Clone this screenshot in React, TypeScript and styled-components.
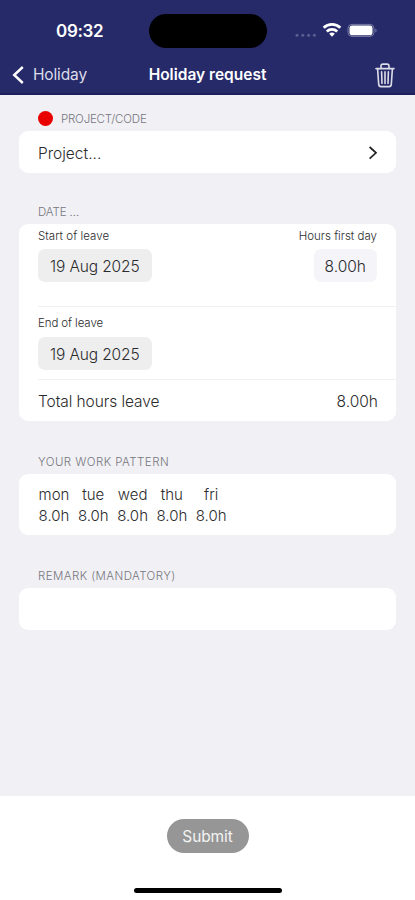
import React from "react";
import styled, { createGlobalStyle } from "styled-components";

const days = [
  { name: "mon", hours: "8.0h" },
  { name: "tue", hours: "8.0h" },
  { name: "wed", hours: "8.0h" },
  { name: "thu", hours: "8.0h" },
  { name: "fri", hours: "8.0h" },
];

const App = () => {
  return (
    <>
      <GlobalStyle />
      <Screen>
        {/* HEADER */}
        <Header>
          <StatusBar>
            <Clock>09:32</Clock>
            <Island />
            <StatusIcons>
              <svg width="84" height="20" viewBox="0 0 84 20">
                <g fill="#5a5e91">
                  <circle cx="3" cy="14.2" r="1.5" />
                  <circle cx="8.8" cy="14.2" r="1.5" />
                  <circle cx="14.6" cy="14.2" r="1.5" />
                  <circle cx="20.4" cy="14.2" r="1.5" />
                </g>
                <g fill="none" stroke="#fff" strokeWidth="2.8">
                  <path d="M29.7 6.7a12.2 12.2 0 0 1 16.6 0" />
                  <path d="M32.8 10.4a7.6 7.6 0 0 1 10.4 0" />
                </g>
                <path d="M38 15.8l-2.8-3a4.2 4.2 0 0 1 5.6 0z" fill="#fff" />
                <rect
                  x="54"
                  y="3.4"
                  width="26"
                  height="12"
                  rx="4"
                  fill="none"
                  stroke="#777aa5"
                />
                <rect x="55.5" y="4.6" width="23" height="9.6" rx="2.8" fill="#fff" />
                <path d="M81.4 7.4c1.6.5 1.6 3.5 0 4z" fill="#777aa5" />
              </svg>
            </StatusIcons>
          </StatusBar>
          <NavBar>
            <Back>
              <svg width="12" height="20" viewBox="0 0 12 20">
                <path
                  d="M10.8 2L2.2 10l8.6 8"
                  fill="none"
                  stroke="#fff"
                  strokeWidth="2.4"
                />
              </svg>
              <span>Holiday</span>
            </Back>
            <Title>Holiday request</Title>
            <Trash>
              <svg width="20" height="26" viewBox="0 0 20 26">
                <g
                  fill="none"
                  stroke="#dcdce9"
                  strokeWidth="1.6"
                  strokeLinecap="round"
                  strokeLinejoin="round"
                >
                  <path d="M1 6.6h18" />
                  <path d="M6 6.4V4.1Q6 2.1 8 2.1h4q2 0 2 2V6.4" />
                  <path d="M2.6 6.9l1.1 15.5q.2 2.2 2.2 2.2h8.2q2 0 2.2-2.2L17.4 6.9" />
                  <path d="M6.6 9.9l.4 11.5M10 9.9v11.5M13.4 9.9L13 21.4" />
                </g>
              </svg>
            </Trash>
          </NavBar>
        </Header>

        {/* FORM */}
        <Form>
          <Caption $height={36} $spacing={-0.2}>
            <Dot />
            PROJECT/CODE
          </Caption>
          <Card>
            <Row $height={42}>
              <Text>Project...</Text>
              <svg width="9" height="16" viewBox="0 0 9 16">
                <path
                  d="M.6 2L7 7.8.6 13.6"
                  fill="none"
                  stroke="#222"
                  strokeWidth="1.7"
                />
              </svg>
            </Row>
          </Card>

          <Caption $height={51} $spacing={-0.1}>
            DATE ...
          </Caption>
          <Card>
            <Field $height={82}>
              <FieldLine>
                <Label $spacing={0.05}>Start of leave</Label>
                <Label>Hours first day</Label>
              </FieldLine>
              <FieldLine>
                <Chip>19 Aug 2025</Chip>
                <Chip $pale>8.00h</Chip>
              </FieldLine>
            </Field>
            <Field $height={73} $divided>
              <Label $offset={5} $spacing={-0.1}>
                End of leave
              </Label>
              <Chip>19 Aug 2025</Chip>
            </Field>
            <Row $height={42} $divided>
              <Text $spacing={-0.08}>Total hours leave</Text>
              <Text>8.00h</Text>
            </Row>
          </Card>

          <Caption $height={53} $spacing={0.45}>
            YOUR WORK PATTERN
          </Caption>
          <Card>
            <Pattern>
              {days.map((day) => (
                <Day key={day.name}>
                  <span>{day.name}</span>
                  <span>{day.hours}</span>
                </Day>
              ))}
            </Pattern>
          </Card>

          <Caption $height={53} $spacing={0.42}>
            REMARK (MANDATORY)
          </Caption>
          <Card>
            <Remark aria-label="Remark" />
          </Card>
        </Form>

        {/* FOOTER */}
        <Footer>
          <Submit>Submit</Submit>
          <HomeBar />
        </Footer>
      </Screen>
    </>
  );
};

const GlobalStyle = createGlobalStyle`
  * {
    box-sizing: border-box;
  }

  body {
    margin: 0;
    font-family: Inter, "Liberation Sans", sans-serif;
    color: #2b2b2d;
  }

  svg {
    display: block;
  }
`;

const Screen = styled.main`
  width: 415px;
  height: 900px;
  display: flex;
  flex-direction: column;
  overflow: hidden;
  background: #f0f0f5;
`;

const Header = styled.header`
  height: 95px;
  flex: none;
  color: #fff;
  background: #262a68;
  border-bottom: 2px solid #1e205e;
`;

const StatusBar = styled.div`
  height: 62px;
  display: grid;
  grid-template-columns: 149px 118px 1fr;
  align-items: center;
`;

const Clock = styled.span`
  padding-left: 56px;
  font-size: 17px;
  font-weight: 600;
  letter-spacing: -0.3px;
`;

const Island = styled.div`
  height: 34px;
  border-radius: 17px;
  background: #000;
`;

const StatusIcons = styled.div`
  padding-left: 27px;
`;

const NavBar = styled.nav`
  height: 23px;
  display: grid;
  grid-template-columns: 1fr auto 1fr;
  align-items: center;
  padding: 0 20px 0 12px;
`;

const Back = styled.div`
  display: flex;
  align-items: center;
  gap: 9px;
  font-size: 15.5px;
  line-height: 20px;
  letter-spacing: -0.15px;
  color: #dcdce9;
`;

const Title = styled.h1`
  margin: 0 0 0 8px;
  font-size: 15.5px;
  line-height: 20px;
  font-weight: 600;
`;

const Trash = styled.div`
  justify-self: end;
`;

const Form = styled.section`
  flex: 1;
  padding: 0 19px;
`;

const Caption = styled.h2<{ $height: number; $spacing: number }>`
  height: ${({ $height }) => $height}px;
  margin: 0;
  padding: 0 19px 4px;
  display: flex;
  align-items: flex-end;
  font-size: 11.5px;
  line-height: 15px;
  font-weight: 300;
  letter-spacing: ${({ $spacing }) => $spacing}px;
  color: #77777d;
`;

const Dot = styled.span`
  width: 15px;
  height: 15px;
  margin: 0 8px 1px 0;
  border-radius: 50%;
  background: #e90000;
`;

const Card = styled.div`
  border-radius: 9px;
  background: #fff;
`;

const Row = styled.div<{ $height: number; $divided?: boolean }>`
  height: ${({ $height }) => $height}px;
  margin-left: 19px;
  padding: 2px 18px 0 0;
  display: flex;
  align-items: center;
  justify-content: space-between;
  border-top: ${({ $divided }) => ($divided ? "1px solid #f0f0f2" : "none")};
`;

const Text = styled.span<{ $spacing?: number }>`
  font-size: 15.5px;
  font-weight: 300;
  letter-spacing: ${({ $spacing = 0 }) => $spacing}px;
`;

const Field = styled.div<{ $height: number; $divided?: boolean }>`
  height: ${({ $height }) => $height}px;
  margin-left: 19px;
  padding: ${({ $divided }) => ($divided ? 4 : 5)}px 19px 0 0;
  border-top: ${({ $divided }) => ($divided ? "1px solid #f0f0f2" : "none")};
`;

const FieldLine = styled.div`
  display: flex;
  justify-content: space-between;
`;

const Label = styled.div<{ $offset?: number; $spacing?: number }>`
  padding-top: ${({ $offset = 0 }) => $offset}px;
  font-size: 11.5px;
  line-height: 15px;
  font-weight: 300;
  letter-spacing: ${({ $spacing = 0 }) => $spacing}px;

  & + span {
    margin-top: 6px;
  }
`;

const Chip = styled.span<{ $pale?: boolean }>`
  width: fit-content;
  height: 33px;
  margin-top: 5px;
  padding: 1px ${({ $pale }) => ($pale ? 11 : 12)}px 0;
  display: flex;
  align-items: center;
  border-radius: 7px;
  font-size: 15.5px;
  font-weight: ${({ $pale }) => ($pale ? 300 : 350)};
  letter-spacing: ${({ $pale }) => ($pale ? 0 : -0.12)}px;
  background: ${({ $pale }) => ($pale ? "#f4f4f9" : "#eeeeef")};
`;

const Pattern = styled.div`
  height: 61px;
  padding: 10px 19px;
  display: grid;
  grid-template-columns: repeat(5, 32px);
  column-gap: 7.3px;
`;

const Day = styled.div`
  display: flex;
  flex-direction: column;
  align-items: center;
  font-size: 15px;
  line-height: 21px;
  font-weight: 300;
  white-space: nowrap;
`;

const Remark = styled.input`
  display: block;
  width: 100%;
  height: 42px;
  padding: 0 19px;
  border: 0;
  border-radius: 9px;
  font: inherit;
  background: transparent;
`;

const Footer = styled.footer`
  height: 104px;
  flex: none;
  padding-top: 23px;
  display: flex;
  flex-direction: column;
  align-items: center;
  background: #fff;
`;

const Submit = styled.button`
  width: 82px;
  height: 34px;
  padding: 1px 0 0;
  border: 0;
  border-radius: 17px;
  font-family: inherit;
  font-size: 15.5px;
  letter-spacing: -0.1px;
  color: #f3f3f3;
  background: #969696;
`;

const HomeBar = styled.div`
  width: 148px;
  height: 5px;
  margin-top: 35px;
  border-radius: 3px;
  background: #000;
`;

export default App;
